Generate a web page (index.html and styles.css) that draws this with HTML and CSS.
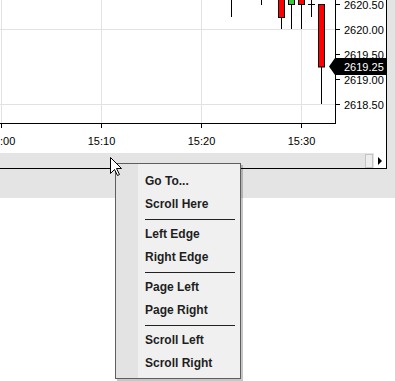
FILE: index.html
```html
<!DOCTYPE html>
<html lang="en">
<head>
  <meta charset="UTF-8">
  <title>Chart Scroll Menu</title>
  <link rel="stylesheet" href="styles.css">
</head>
<body>
  <div class="window">
    <div class="panel">
      <svg class="chart" width="386" height="153" viewBox="0 0 386 153">
        <!-- grid -->
        <g stroke="#e2e2e2" stroke-width="1">
          <line x1="0" y1="29.5" x2="335" y2="29.5"/>
          <line x1="0" y1="104.5" x2="335" y2="104.5"/>
          <line x1="1.5" y1="0" x2="1.5" y2="123"/>
          <line x1="101.5" y1="0" x2="101.5" y2="123"/>
          <line x1="201.5" y1="0" x2="201.5" y2="123"/>
          <line x1="301.5" y1="0" x2="301.5" y2="123"/>
        </g>
        <!-- candles -->
        <g stroke="#000" stroke-width="1">
          <line x1="231.5" y1="0" x2="231.5" y2="17"/>
          <line x1="261.5" y1="0" x2="261.5" y2="5"/>
          <line x1="281.5" y1="17.5" x2="281.5" y2="29"/>
          <rect x="278.5" y="-1" width="6" height="18.5" fill="#ff0000"/>
          <line x1="291.5" y1="4.5" x2="291.5" y2="29"/>
          <rect x="288.5" y="-1" width="6" height="5.5" fill="#33cc33"/>
          <line x1="301.5" y1="4.5" x2="301.5" y2="29"/>
          <rect x="298.5" y="-1" width="6" height="5.5" fill="#ff0000"/>
          <line x1="311.5" y1="0" x2="311.5" y2="17"/>
          <line x1="308" y1="4.5" x2="315" y2="4.5"/>
          <line x1="321.5" y1="67" x2="321.5" y2="104"/>
          <rect x="318.5" y="4.5" width="6" height="62.5" fill="#ff0000"/>
        </g>
        <!-- axes -->
        <g stroke="#000" stroke-width="1">
          <line x1="335.5" y1="0" x2="335.5" y2="124"/>
          <line x1="0" y1="123.5" x2="336" y2="123.5"/>
          <line x1="1.5" y1="123" x2="1.5" y2="128"/>
          <line x1="101.5" y1="123" x2="101.5" y2="128"/>
          <line x1="201.5" y1="123" x2="201.5" y2="128"/>
          <line x1="301.5" y1="123" x2="301.5" y2="128"/>
          <line x1="335" y1="4.5" x2="340" y2="4.5"/>
          <line x1="335" y1="29.5" x2="340" y2="29.5"/>
          <line x1="335" y1="54.5" x2="340" y2="54.5"/>
          <line x1="335" y1="79.5" x2="340" y2="79.5"/>
          <line x1="335" y1="104.5" x2="340" y2="104.5"/>
        </g>
        <g class="axis-text">
          <text x="344" y="9">2620.50</text>
          <text x="344" y="34">2620.00</text>
          <text x="344" y="59">2619.50</text>
          <text x="344" y="84">2619.00</text>
          <text x="344" y="109">2618.50</text>
          <text x="1.5" y="145" text-anchor="middle">15:00</text>
          <text x="101.5" y="145" text-anchor="middle">15:10</text>
          <text x="201.5" y="145" text-anchor="middle">15:20</text>
          <text x="301.5" y="145" text-anchor="middle">15:30</text>
        </g>
        <polygon points="329,66.5 335,58 386,58 386,75 335,75" fill="#000"/>
        <text class="axis-text price-tag" x="344" y="70.5">2619.25</text>
      </svg>
      <div class="scrollbar">
        <div class="thumb"></div>
        <div class="arrow-btn"><span class="arrow"></span></div>
      </div>
    </div>
  </div>

  <div class="menu">
    <div class="menu-item">Go To...</div>
    <div class="menu-item">Scroll Here</div>
    <div class="menu-sep"></div>
    <div class="menu-item">Left Edge</div>
    <div class="menu-item">Right Edge</div>
    <div class="menu-sep"></div>
    <div class="menu-item">Page Left</div>
    <div class="menu-item">Page Right</div>
    <div class="menu-sep"></div>
    <div class="menu-item">Scroll Left</div>
    <div class="menu-item">Scroll Right</div>
  </div>

  <svg class="cursor" width="13" height="20" viewBox="0 0 13 20">
    <path d="M0.5,0.5 L0.5,16.5 L4.5,12.5 L7.5,18.5 L9.5,17.5 L6.5,11.5 L11.5,11.5 Z" fill="#fff" stroke="#000" stroke-width="1" stroke-linejoin="miter"/>
  </svg>
</body>
</html>
```

FILE: styles.css
```css
body {
  margin: 0;
  width: 395px;
  height: 381px;
  background: #fff;
  font-family: "Liberation Sans", Arial, sans-serif;
  position: relative;
  overflow: hidden;
}

.window {
  background: #e4e4e4;
  height: 198px;
}

.panel {
  width: 386px;
  background: #fff;
  border-right: 1px solid #000;
  border-bottom: 1px solid #000;
}

.chart {
  display: block;
}

.axis-text {
  font-family: "Liberation Sans", Arial, sans-serif;
  font-size: 11px;
  fill: #000;
}

.price-tag {
  fill: #fff;
}

.scrollbar {
  height: 15px;
  background: #e4e4e4;
  display: flex;
  justify-content: flex-end;
  align-items: center;
}

.thumb {
  width: 6px;
  height: 12px;
  background: #ededed;
  border: 1px solid #c4c4c4;
  margin-right: 1px;
}

.arrow-btn {
  width: 12px;
  height: 15px;
  background: #fff;
  display: flex;
  align-items: center;
  justify-content: center;
}

.arrow {
  width: 0;
  height: 0;
  border-top: 4px solid transparent;
  border-bottom: 4px solid transparent;
  border-left: 4px solid #000;
}

.menu {
  position: absolute;
  left: 115px;
  top: 163px;
  width: 124px;
  padding: 6px 0 3px;
  background: linear-gradient(to right, #e3e3e3 22px, #f0f0f0 22px);
  border: 1px solid #5e5e5e;
  box-shadow: 2px 2px 0 rgba(0, 0, 0, 0.22);
}

.menu-item {
  height: 23px;
  line-height: 23px;
  padding-left: 29px;
  font-size: 12px;
  font-weight: bold;
  color: #1e1e1e;
}

.menu-sep {
  height: 0;
  border-top: 1px solid #222;
  margin: 3px 5px 3px 29px;
}

.cursor {
  position: absolute;
  left: 110px;
  top: 157px;
}
```
